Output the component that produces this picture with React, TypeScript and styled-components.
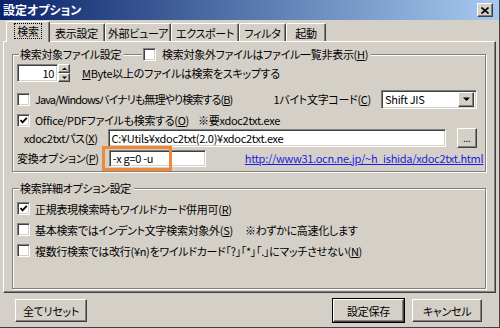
import React from "react";
import styled, { createGlobalStyle, css } from "styled-components";

const GlobalStyle = createGlobalStyle`
  html, body {
    margin: 0;
    padding: 0;
    background: #d4d0c8;
  }
  body {
    font-family: "MS UI Gothic", "Noto Sans CJK JP", sans-serif;
    font-size: 11px;
    letter-spacing: -0.3px;
    font-feature-settings: "palt";
    color: #000;
  }
`;

const raised = css`
  border-top: 1px solid #fff;
  border-left: 1px solid #fff;
  border-right: 1px solid #404040;
  border-bottom: 1px solid #404040;
  box-shadow: inset -1px -1px 0 #808080;
`;

const sunken = css`
  border-top: 1px solid #808080;
  border-left: 1px solid #808080;
  border-right: 1px solid #fff;
  border-bottom: 1px solid #fff;
  box-shadow: inset 1px 1px 0 #404040, inset -1px -1px 0 #d4d0c8;
`;

const Window = styled.div`
  width: 500px;
  height: 328px;
  box-sizing: border-box;
  display: flex;
  flex-direction: column;
  background: #d4d0c8;
  border-right: 1px solid #404040;
  border-bottom: 1px solid #404040;
  overflow: hidden;
`;

const TitleBar = styled.div`
  flex: none;
  height: 20px;
  display: flex;
  align-items: center;
  justify-content: space-between;
  padding: 0 6px 0 3px;
  background: linear-gradient(to right, #0a246a, #a6caf0);
`;

const TitleText = styled.span`
  color: #fff;
  font-weight: bold;
  font-size: 12px;
  letter-spacing: 0;
  line-height: 14px;
`;

const CloseButton = styled.div`
  width: 14px;
  height: 12px;
  display: flex;
  align-items: center;
  justify-content: center;
  background: #d4d0c8;
  ${raised};
`;

const TabRow = styled.div`
  flex: none;
  height: 21px;
  display: flex;
  align-items: flex-end;
  padding-left: 5px;
  margin: 0 3px;
`;

const Tab = styled.div<{ $w: number; $active?: boolean }>`
  box-sizing: border-box;
  width: ${({ $w }) => $w}px;
  height: 18px;
  display: flex;
  align-items: center;
  justify-content: center;
  line-height: 14px;
  white-space: nowrap;
  border-top: 1px solid #fff;
  border-left: 1px solid #fff;
  border-right: 1px solid #404040;
  border-radius: 2px 2px 0 0;
  box-shadow: inset -1px 0 0 #808080;
  background: #d4d0c8;
  ${({ $active }) =>
    $active &&
    css`
      height: 21px;
      margin: 0 -2px -1px -2px;
      position: relative;
      z-index: 1;
      padding-bottom: 2px;
    `}
`;

const TabLabel = styled.span<{ $active?: boolean }>`
  padding: 0 2px;
  outline: ${({ $active }) => ($active ? "1px dotted #000" : "none")};
`;

const Panel = styled.div`
  flex: none;
  box-sizing: border-box;
  height: 252px;
  margin: 0 3px;
  padding: 12px 9px 3px 8px;
  display: flex;
  flex-direction: column;
  ${raised};
`;

const Group = styled.div<{ $grow?: boolean }>`
  box-sizing: border-box;
  display: flex;
  flex-direction: column;
  padding: 0 8px 4px 4px;
  border: 1px solid #808080;
  box-shadow: inset 1px 1px 0 #fff, 1px 1px 0 #fff;
  ${({ $grow }) =>
    $grow &&
    css`
      flex: 1;
      margin-top: 16px;
    `}
`;

const Legend = styled.div`
  align-self: flex-start;
  display: flex;
  align-items: center;
  gap: 18px;
  height: 14px;
  line-height: 14px;
  margin: -8px 0 0 2px;
  white-space: nowrap;
`;

const LegendPart = styled.span`
  display: flex;
  align-items: center;
  gap: 6px;
  padding: 0 3px 0 1px;
  background: #d4d0c8;
`;

const Row = styled.div<{ $h: number; $mt?: number }>`
  display: flex;
  align-items: center;
  height: ${({ $h }) => $h}px;
  margin-top: ${({ $mt }) => $mt ?? 0}px;
  white-space: nowrap;
  line-height: 14px;
  position: relative;
`;

const Box = styled.span`
  flex: none;
  box-sizing: border-box;
  width: 13px;
  height: 13px;
  display: inline-flex;
  align-items: center;
  justify-content: center;
  background: #fff;
  ${sunken};
`;

const CheckLabel = styled.span<{ $tight?: boolean }>`
  margin-left: 5px;
  letter-spacing: ${({ $tight }) => ($tight ? "-0.9px" : "inherit")};
`;

const Note = styled.span<{ $ml: number; $push?: boolean }>`
  margin-left: ${({ $ml, $push }) => ($push ? "auto" : `${$ml}px`)};
`;

const Field = styled.div<{ $w: number; $h: number }>`
  flex: none;
  box-sizing: border-box;
  width: ${({ $w }) => $w}px;
  height: ${({ $h }) => $h}px;
  display: flex;
  align-items: center;
  padding: 0 3px;
  background: #fff;
  white-space: nowrap;
  overflow: hidden;
  ${sunken};
`;

const SpinField = styled(Field)`
  justify-content: flex-end;
`;

const Spin = styled.div`
  flex: none;
  display: flex;
  flex-direction: column;
  width: 12px;
  height: 18px;
`;

const SpinButton = styled.div`
  box-sizing: border-box;
  flex: 1;
  display: flex;
  align-items: center;
  justify-content: center;
  background: #d4d0c8;
  ${raised};
`;

const FieldLabel = styled.span`
  width: 83px;
  text-align: right;
  margin-right: 10px;
`;

const Combo = styled(Field)`
  padding: 0 2px 0 3px;
  justify-content: space-between;
  margin-left: 10px;
`;

const ComboButton = styled.div`
  box-sizing: border-box;
  width: 16px;
  height: 15px;
  display: flex;
  align-items: center;
  justify-content: center;
  background: #d4d0c8;
  ${raised};
`;

const Browse = styled.div`
  box-sizing: border-box;
  width: 21px;
  height: 20px;
  margin-left: 11px;
  display: flex;
  align-items: center;
  justify-content: center;
  background: #d4d0c8;
  font-size: 10px;
  ${raised};
`;

const Highlight = styled.div`
  position: absolute;
  left: 85px;
  top: -3px;
  width: 70px;
  height: 25px;
  box-sizing: border-box;
  border: 3px solid #f0883a;
  pointer-events: none;
`;

const Link = styled.a`
  margin-left: 39px;
  color: #1c1ce0;
  text-decoration: underline;
`;

const Footer = styled.div`
  flex: none;
  display: flex;
  justify-content: space-between;
  margin-top: 6px;
  padding: 0 17px 0 15px;
`;

const ButtonGroup = styled.div`
  display: flex;
  gap: 8px;
`;

const Button = styled.div<{ $w: number; $default?: boolean }>`
  box-sizing: border-box;
  width: ${({ $w }) => $w}px;
  height: 23px;
  display: flex;
  align-items: center;
  justify-content: center;
  background: #d4d0c8;
  line-height: 14px;
  ${raised};
  ${({ $default }) =>
    $default &&
    css`
      outline: 1px solid #000;
      outline-offset: 0;
    `}
`;

const Check = () => (
  <svg width="9" height="9" viewBox="0 0 9 9">
    <path d="M1.5 4 L3.5 6.3 L7.8 1.8" fill="none" stroke="#000" strokeWidth="1.8" />
  </svg>
);

const Checkbox: React.FC<{ checked?: boolean }> = ({ checked }) => <Box>{checked && <Check />}</Box>;

const Arrow: React.FC<{ up?: boolean; size?: number }> = ({ up, size = 5 }) => {
  const h = Math.ceil(size / 2);
  const w = size + 2;
  return (
    <svg width={w} height={h + 1} viewBox={`0 0 ${w} ${h + 1}`}>
      <polygon
        points={up ? `1,${h} ${size + 1},${h} ${w / 2},0.5` : `1,0.5 ${size + 1},0.5 ${w / 2},${h}`}
        fill="#000"
      />
    </svg>
  );
};

const tabs = [
  { label: "検索", w: 40 },
  { label: "表示設定", w: 57 },
  { label: "外部ビューア", w: 66 },
  { label: "エクスポート", w: 68 },
  { label: "フィルタ", w: 47 },
  { label: "起動", w: 40 },
];

const App: React.FC = () => (
  <>
    <GlobalStyle />
    <Window>
      <TitleBar>
        <TitleText>設定オプション</TitleText>
        <CloseButton>
          <svg width="8" height="7" viewBox="0 0 8 7">
            <path d="M0.5 0.5 L7.5 6.5 M7.5 0.5 L0.5 6.5" stroke="#000" strokeWidth="1.6" />
          </svg>
        </CloseButton>
      </TitleBar>

      <TabRow>
        {tabs.map((t, i) => (
          <Tab key={t.label} $w={i === 0 ? t.w + 4 : t.w} $active={i === 0}>
            <TabLabel $active={i === 0}>{t.label}</TabLabel>
          </Tab>
        ))}
      </TabRow>

      <Panel>
        <Group>
          <Legend>
            <LegendPart>検索対象ファイル設定</LegendPart>
            <LegendPart>
              <Checkbox />
              <span>
                検索対象外ファイルはファイル一覧非表示(<u>H</u>)
              </span>
            </LegendPart>
          </Legend>

          <Row $h={18} $mt={3}>
            <SpinField $w={41} $h={18}>10</SpinField>
            <Spin>
              <SpinButton>
                <Arrow up />
              </SpinButton>
              <SpinButton>
                <Arrow />
              </SpinButton>
            </Spin>
            <Note $ml={12}>
              <u>M</u>Byte以上のファイルは検索をスキップする
            </Note>
          </Row>

          <Row $h={20} $mt={7}>
            <Checkbox />
            <CheckLabel $tight>
              Java/Windowsバイナリも無理やり検索する(<u>B</u>)
            </CheckLabel>
            <Note $ml={0} $push>
              1バイト文字コード(<u>C</u>)
            </Note>
            <Combo $w={96} $h={19}>
              <span>Shift JIS</span>
              <ComboButton>
                <Arrow size={7} />
              </ComboButton>
            </Combo>
          </Row>

          <Row $h={14} $mt={4}>
            <Checkbox checked />
            <CheckLabel>
              Office/PDFファイルも検索する(<u>O</u>)
            </CheckLabel>
            <Note $ml={9}>※要xdoc2txt.exe</Note>
          </Row>

          <Row $h={21} $mt={0}>
            <FieldLabel>
              xdoc2txtパス(<u>X</u>)
            </FieldLabel>
            <Field $w={338} $h={18}>
              C:¥Utils¥xdoc2txt(2.0)¥xdoc2txt.exe
            </Field>
            <Browse>...</Browse>
          </Row>

          <Row $h={18} $mt={1}>
            <FieldLabel>
              変換オプション(<u>P</u>)
            </FieldLabel>
            <Field $w={97} $h={17}>
              -x g=0 -u
            </Field>
            <Link>http://www31.ocn.ne.jp/~h_ishida/xdoc2txt.html</Link>
            <Highlight />
          </Row>
        </Group>

        <Group $grow>
          <Legend>
            <LegendPart>検索詳細オプション設定</LegendPart>
          </Legend>
          <Row $h={21} $mt={3}>
            <Checkbox checked />
            <CheckLabel>
              正規表現検索時もワイルドカード併用可(<u>R</u>)
            </CheckLabel>
          </Row>
          <Row $h={21}>
            <Checkbox />
            <CheckLabel>
              基本検索ではインデント文字検索対象外(<u>S</u>)
            </CheckLabel>
            <Note $ml={12}>※わずかに高速化します</Note>
          </Row>
          <Row $h={21}>
            <Checkbox />
            <CheckLabel>
              複数行検索では改行(¥n)をワイルドカード「?」「*」「.」にマッチさせない(<u>N</u>)
            </CheckLabel>
          </Row>
        </Group>
      </Panel>

      <Footer>
        <Button $w={72}>全てリセット</Button>
        <ButtonGroup>
          <Button $w={71} $default>
            設定保存
          </Button>
          <Button $w={70}>キャンセル</Button>
        </ButtonGroup>
      </Footer>
    </Window>
  </>
);

export default App;
